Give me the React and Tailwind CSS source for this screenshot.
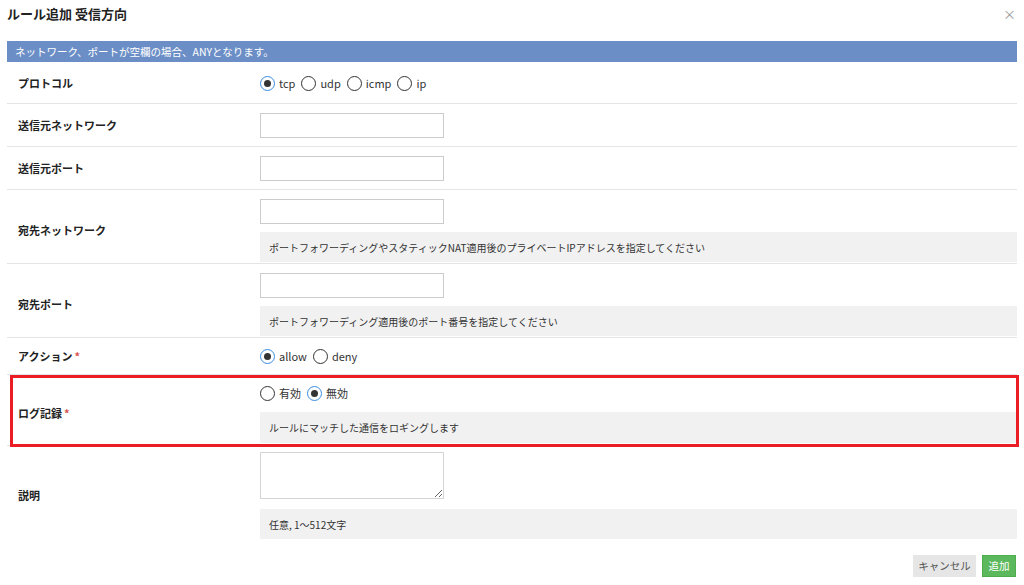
import { useState } from 'react';

const font = { fontFamily: '"Noto Sans CJK JP", "Noto Sans", sans-serif' };

function Radio({ value, label, checked, onChange }) {
  return (
    <label className="flex items-center gap-[4px] mr-[6px] cursor-pointer" onClick={() => onChange(value)}>
      <span
        className={`w-[15px] h-[15px] rounded-full border-[1.5px] flex items-center justify-center bg-white ${
          checked ? 'border-[#3b8de0]' : 'border-[#333]'
        }`}
      >
        {checked && <span className="w-[7px] h-[7px] rounded-full bg-[#333]" />}
      </span>
      <span className="text-[11px] text-[#333]">{label}</span>
    </label>
  );
}

function Help({ children, h = 'h-[30px]' }) {
  return (
    <div className={`${h} bg-[#f1f1f1] flex items-center pl-[9px] text-[10px] text-[#333]`}>{children}</div>
  );
}

function Label({ children, required }) {
  return (
    <div className="w-[253px] shrink-0 pl-[11px] text-[11px] font-bold text-[#222] flex items-center">
      {children}
      {required && <span className="text-[#d9534f] ml-[2px]">*</span>}
    </div>
  );
}

const inputCls = 'w-[184px] h-[25px] border border-[#ccc] bg-white outline-none';

export default function App() {
  const [protocol, setProtocol] = useState('tcp');
  const [action, setAction] = useState('allow');
  const [log, setLog] = useState('off');

  return (
    <div className="w-[1024px] h-[585px] bg-white px-[7px] overflow-hidden" style={font}>
      {/* Header */}
      <div className="h-[41px] flex items-start justify-between pt-[5px]">
        <h1 className="text-[13px] font-bold text-[#222] leading-[18px]">ルール追加 受信方向</h1>
        <span className="text-[#999] text-[13px] mr-[1px] leading-[18px]">×</span>
      </div>

      <div className="h-[21px] bg-[#6b8ec6] text-white text-[10.5px] flex items-center pl-[8px]">
        ネットワーク、ポートが空欄の場合、ANYとなります。
      </div>

      {/* プロトコル */}
      <div className="flex h-[42px] pt-[1px] border-b border-[#e4e4e4]">
        <Label>プロトコル</Label>
        <div className="flex items-center">
          {['tcp', 'udp', 'icmp', 'ip'].map(p => (
            <Radio key={p} value={p} label={p} checked={protocol === p} onChange={setProtocol} />
          ))}
        </div>
      </div>

      <div className="flex pt-[9px] pb-[8px] border-b border-[#e4e4e4]">
        <Label>送信元ネットワーク</Label>
        <input className={inputCls} />
      </div>

      <div className="flex pt-[9px] pb-[8px] border-b border-[#e4e4e4]">
        <Label>送信元ポート</Label>
        <input className={inputCls} />
      </div>

      <div className="flex pt-[9px] pb-[1px] border-b border-[#e4e4e4]">
        <Label>宛先ネットワーク</Label>
        <div className="flex-1 flex flex-col gap-[8px]">
          <input className={inputCls} />
          <Help>ポートフォワーディングやスタティックNAT適用後のプライベートIPアドレスを指定してください</Help>
        </div>
      </div>

      <div className="flex pt-[9px] pb-[1px] border-b border-[#e4e4e4]">
        <Label>宛先ポート</Label>
        <div className="flex-1 flex flex-col gap-[8px]">
          <input className={inputCls} />
          <Help>ポートフォワーディング適用後のポート番号を指定してください</Help>
        </div>
      </div>

      <div className="flex h-[37px] border-b border-[#e4e4e4]">
        <Label required>アクション</Label>
        <div className="flex items-center">
          <Radio value="allow" label="allow" checked={action === 'allow'} onChange={setAction} />
          <Radio value="deny" label="deny" checked={action === 'deny'} onChange={setAction} />
        </div>
      </div>

      {/* ログ記録 (highlighted) */}
      <div className="relative flex pt-[9px] pb-[2px] border-b border-[#e4e4e4]">
        <Label required>ログ記録</Label>
        <div className="flex-1 flex flex-col gap-[10px]">
          <div className="h-[18px] flex items-center">
            <Radio value="on" label="有効" checked={log === 'on'} onChange={setLog} />
            <Radio value="off" label="無効" checked={log === 'off'} onChange={setLog} />
          </div>
          <Help h="h-[31px]">ルールにマッチした通信をロギングします</Help>
        </div>
        <div className="absolute left-[3px] right-[-2px] top-0 bottom-[-2px] border-[3px] border-[#ec1c24] pointer-events-none" />
      </div>

      <div className="flex pt-[6px]">
        <Label>説明</Label>
        <div className="flex-1 flex flex-col gap-[10px]">
          <textarea className="w-[184px] h-[47px] border-[1.5px] border-[#d4d4d4] bg-white outline-none resize-y" />
          <Help>任意, 1〜512文字</Help>
        </div>
      </div>

      <div className="flex justify-end gap-[6px] mt-[16px] pr-[1px]">
        <button className="h-[22px] w-[63px] bg-[#e6e6e6] text-[#555] text-[10.5px]">キャンセル</button>
        <button className="h-[22px] w-[34px] bg-[#5cb85c] border border-[#4cae4c] text-white text-[10.5px]">追加</button>
      </div>
    </div>
  );
}
